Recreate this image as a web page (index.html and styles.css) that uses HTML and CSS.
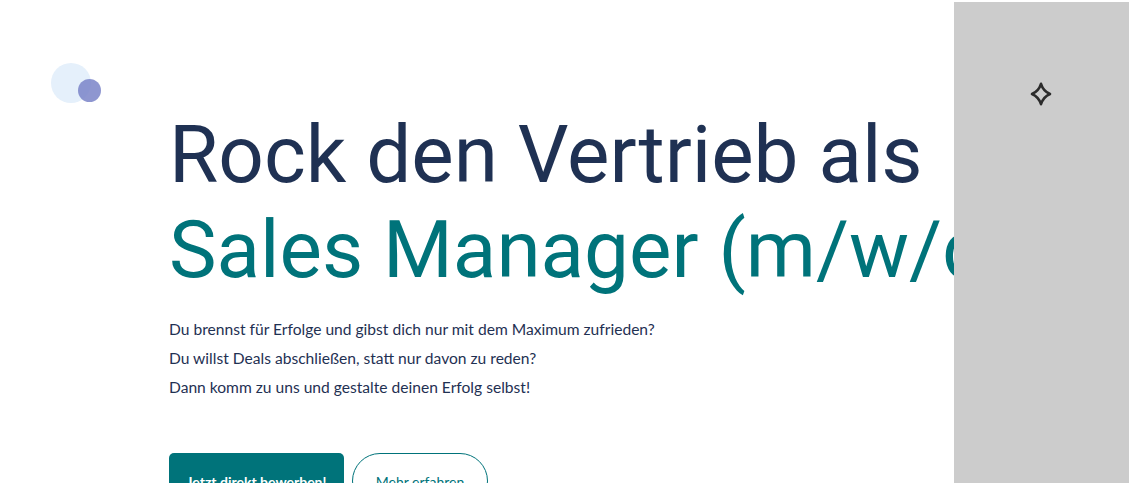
FILE: index.html
```html
<!DOCTYPE html>
<html lang="de">
<head>
<meta charset="utf-8">
<title>Sales Manager</title>
<link rel="stylesheet" href="styles.css">
</head>
<body>
<div class="page">
  <div class="logo">
    <span class="logo-big"></span>
    <span class="logo-small"></span>
  </div>
  <main class="hero">
    <h1 class="title">
      <span class="title-line dark">Rock den Vertrieb als</span>
      <span class="title-line teal">Sales Manager (m/w/d)</span>
    </h1>
    <div class="intro">
      <p>Du brennst für Erfolge und gibst dich nur mit dem Maximum zufrieden?</p>
      <p>Du willst Deals abschließen, statt nur davon zu reden?</p>
      <p>Dann komm zu uns und gestalte deinen Erfolg selbst!</p>
    </div>
    <div class="actions">
      <a class="btn btn-primary" href="#">Jetzt direkt bewerben!</a>
      <a class="btn btn-outline" href="#">Mehr erfahren</a>
    </div>
  </main>
</div>
<aside class="side-panel">
  <svg class="sparkle" width="22" height="24" viewBox="0 0 22 24" aria-hidden="true">
    <path d="M11 1.8 Q13.2 9 20 12 Q13.2 15 11 22.2 Q8.8 15 2 12 Q8.8 9 11 1.8 Z" fill="none" stroke="#2b2b2b" stroke-width="2.6" stroke-linejoin="round"/>
  </svg>
</aside>
</body>
</html>
```
FILE: styles.css
```css
html, body {
  margin: 0;
  padding: 0;
  background: #ffffff;
  overflow: hidden;
}
body {
  width: 1129px;
  height: 483px;
  position: relative;
  font-family: "Lato", "Open Sans", sans-serif;
}
.page {
  padding: 63px 0 0 51px;
}
.logo {
  position: relative;
  width: 50px;
  height: 40px;
}
.logo-big {
  position: absolute;
  left: 0;
  top: 0;
  width: 40px;
  height: 40px;
  border-radius: 50%;
  background: #e5f0fb;
}
.logo-small {
  position: absolute;
  left: 27px;
  top: 16px;
  width: 23px;
  height: 23px;
  border-radius: 50%;
  background: rgba(122, 132, 200, 0.85);
}
.hero {
  margin-left: 118px;
  margin-top: 5px;
}
.title {
  margin: 0;
  font-family: "Roboto", sans-serif;
  font-weight: 400;
  font-size: 80px;
  line-height: 95px;
  white-space: nowrap;
}
.title-line {
  display: block;
}
.dark {
  color: #1f3153;
}
.teal {
  color: #00737a;
}
.intro {
  margin-top: 17px;
  color: #1f3153;
  font-size: 15.6px;
}
.intro p {
  margin: 0;
  line-height: 29px;
}
.actions {
  margin-top: 51px;
  display: flex;
  gap: 8px;
}
.btn {
  display: inline-flex;
  align-items: center;
  justify-content: center;
  height: 56px;
  box-sizing: border-box;
  font-size: 14px;
  text-decoration: none;
}
.btn-primary {
  width: 175px;
  background: #00737a;
  color: #ffffff;
  font-weight: 700;
  border-radius: 5px;
}
.btn-outline {
  width: 136px;
  border: 1px solid #00737a;
  color: #00737a;
  border-radius: 28px;
}
.side-panel {
  position: absolute;
  left: 954px;
  top: 2px;
  right: 0;
  bottom: 0;
  background: #cccccc;
}
.sparkle {
  position: absolute;
  left: 76px;
  top: 80px;
}
```
